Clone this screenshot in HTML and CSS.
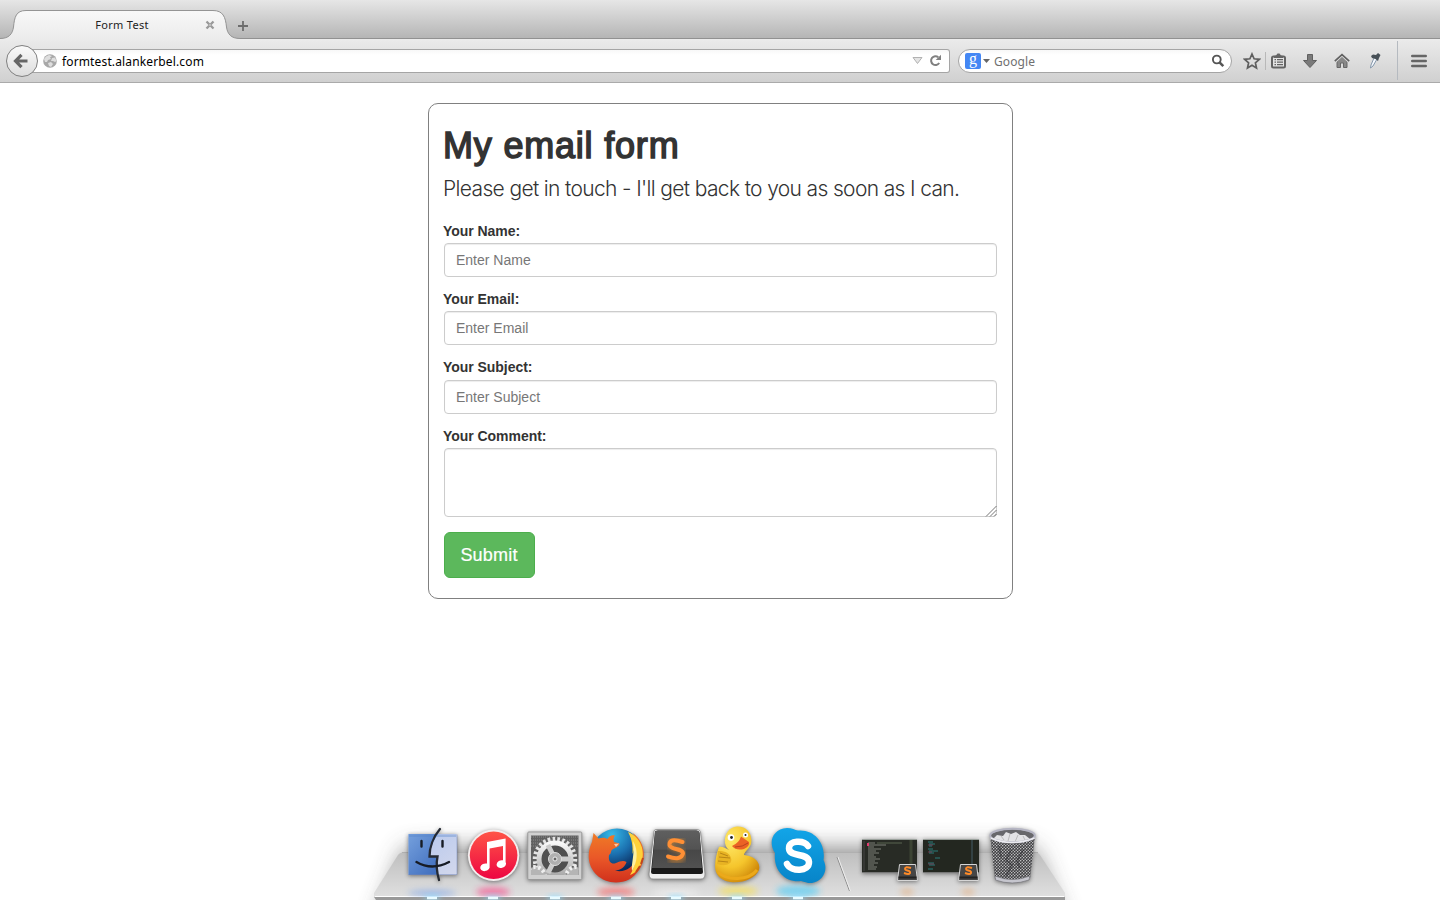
FILE: index.html
```html
<!DOCTYPE html>
<html lang="en">
<head>
<meta charset="utf-8">
<title>Form Test</title>
<link rel="stylesheet" href="styles.css">
</head>
<body>
<header class="chrome">
  <div class="tabstrip">
    <svg class="tab-shape" width="240" height="40" viewBox="0 0 240 40"><defs><linearGradient id="tabfill" x2="0" y2="1"><stop offset="0" stop-color="#f8f8f8"/><stop offset="1" stop-color="#ebebeb"/></linearGradient></defs><path d="M0 38.500C9 38.500 12.500 34 13.500 27C14.500 17 16 10.500 26 10.500H213C223 10.500 225.500 17 226.500 27C227.500 34 231 38.500 240 38.500V40H0Z" fill="url(#tabfill)"/><path d="M0 38.500C9 38.500 12.500 34 13.500 27C14.500 17 16 10.500 26 10.500H213C223 10.500 225.500 17 226.500 27C227.500 34 231 38.500 240 38.500" fill="none" stroke="#949494"/></svg>
    <span class="tab-title">Form Test</span>
    <svg class="tab-close" width="10" height="10" viewBox="0 0 10 10"><path d="M1.500 1.500L8.500 8.500M8.500 1.500L1.500 8.500" stroke="#999" stroke-width="2.300"/><path d="M5 4V6" stroke="#ddd"/></svg>
    <svg class="tab-new" width="12" height="12" viewBox="0 0 12 12"><path d="M6 1V11M1 6H11" stroke="#6d6d6d" stroke-width="1.800"/></svg>
  </div>
  <div class="toolbar">
    <button class="back" aria-label="Back"><svg width="16" height="16" viewBox="0 0 16 16"><path d="M8.500 1.800L2.500 8L8.500 14.200M3 8H14.500" fill="none" stroke="#666" stroke-width="3.200"/></svg></button>
    <div class="urlbar">
      <svg width="14" height="14" viewBox="0 0 14 14"><circle cx="7" cy="7" r="6.800" fill="#a8a8a8"/><path d="M1 5L3 2.500L6 1L9 2L7 3.500L8 5L5 6L4 8L2 8ZM9 4L12 3.500L13.500 7L12 8L10 7L8 7ZM5 9L8 8L10 10L8 13L6 12Z" fill="#dedede"/></svg>
      <span class="url">formtest.alankerbel.com</span>
      <svg class="url-drop" width="11" height="9" viewBox="0 0 11 9"><path d="M1 1.500H10L5.500 7.500Z" fill="#e4e4e4" stroke="#b2b2b2"/></svg>
      <svg class="reload" width="13" height="13" viewBox="0 0 13 13"><path d="M10.200 9A4.400 4.400 0 1 1 9.300 3.200" fill="none" stroke="#808080" stroke-width="2"/><path d="M12 .7V6H6.700Z" fill="#808080"/></svg>
    </div>
    <div class="search">
      <span class="engine">g</span>
      <svg width="7" height="4" viewBox="0 0 7 4"><path d="M0 0H7L3.500 4Z" fill="#666"/></svg>
      <span class="search-text">Google</span>
      <svg width="14" height="14" viewBox="0 0 14 14"><circle cx="5.800" cy="5.500" r="3.900" fill="none" stroke="#555" stroke-width="1.900"/><path d="M8.500 8.300L12.300 12.200" stroke="#555" stroke-width="2.500"/></svg>
    </div>
    <div class="tools">
      <svg width="18" height="18" viewBox="0 0 18 18"><path d="M9 2L11.100 6.800L16.300 7.300L12.400 10.800L13.500 16L9 13.300L4.500 16L5.600 10.800L1.700 7.300L6.900 6.800Z" fill="none" stroke="#5f5f5f" stroke-width="1.700"/></svg>
      <i class="small-divider"></i>
      <svg class="clip" width="15" height="16" viewBox="0 0 15 16"><rect x="1" y="3.500" width="13" height="11" rx="1.500" fill="#e4e4e4" stroke="#646464" stroke-width="2"/><path d="M3 5V3L5 2.500L6.500 .5H8.500L10 2.500L12 3V5Z" fill="#646464"/><path d="M3.500 6.700H5M6 6.700H12M3.500 9.200H5M6 9.200H12M3.500 11.700H5M6 11.700H12" stroke="#646464" stroke-width="1.300"/></svg>
      <svg class="download" width="16" height="16" viewBox="0 0 16 16"><path d="M5.500 1.500H10.500V7.500H14.500L8 14.500L1.500 7.500H5.500Z" fill="#7a7a7a" stroke="#606060"/></svg>
      <svg class="home" width="16" height="16" viewBox="0 0 16 16"><path d="M3 8V14.500H6.500V10H9.500V14.500H13V8L8 3.500Z" fill="#888" stroke="#666"/><path d="M1 8.500L8 2L15 8.500" fill="none" stroke="#ddd" stroke-width="3"/><path d="M.8 8.200L8 1.700L15.200 8.200" fill="none" stroke="#606060" stroke-width="1.700"/></svg>
      <svg class="dropper" width="14" height="18" viewBox="0 0 14 18"><path d="M6 6L3 13L2.500 16L5 14L9 7" fill="#f7faff" stroke="#8497ab"/><path d="M3 4L5 2.500L8 3L10 1L12.500 3L11 6L10 9L7.500 7L4 6Z" fill="#475057"/></svg>
      <i class="large-divider"></i>
      <svg class="menu" width="16" height="14" viewBox="0 0 16 14"><path d="M1.200 2H14.800M1.200 7H14.800M1.200 12H14.800" stroke="#666" stroke-width="2.400" stroke-linecap="round"/></svg>
    </div>
  </div>
</header>
<main class="page">
  <form class="card">
    <h1>My email form</h1>
    <p class="lead">Please get in touch - I'll get back to you as soon as I can.</p>
    <div class="group"><label for="name">Your Name:</label><input id="name" placeholder="Enter Name"></div>
    <div class="group"><label for="email">Your Email:</label><input id="email" placeholder="Enter Email"></div>
    <div class="group"><label for="subject">Your Subject:</label><input id="subject" placeholder="Enter Subject"></div>
    <div class="group"><label for="comment">Your Comment:</label><div class="area"><textarea id="comment"></textarea><svg class="grip" width="12" height="12" viewBox="0 0 12 12"><path d="M1 11.500L11.500 1M5 11.500L11.500 5M9 11.500L11.500 9" stroke="#777"/></svg></div></div>
    <button class="submit" type="button">Submit</button>
  </form>
</main>
<footer class="dock">
  <svg class="shelf" width="800" height="85" viewBox="320 815 800 85">
    <defs>
      <linearGradient id="shelfFill" x2="0" y2="1"><stop offset="0" stop-color="#bebebe"/><stop offset=".5" stop-color="#cfcfcf"/><stop offset="1" stop-color="#e0e0e0"/></linearGradient>
      <filter id="b9" x="-20%" y="-60%" width="140%" height="220%"><feGaussianBlur stdDeviation="12"/></filter>
      <filter id="b3" x="-50%" y="-80%" width="200%" height="260%"><feGaussianBlur stdDeviation="3"/></filter>
    </defs>
    <path d="M406 849H1034L1063 925H377Z" fill="#444" opacity=".68" filter="url(#b9)"/>
    <path d="M406 852H1034Q1038 852 1040 855L1065 893V897H374V893L398 855Q400 852 406 852Z" fill="url(#shelfFill)"/>
    <path d="M402 852.500H1038" stroke="#b0b0b0"/>
    <path d="M375 896.500H1064" stroke="#fff"/>
    <g filter="url(#b3)" opacity=".5"><ellipse cx="432" cy="893" rx="24" ry="3" fill="#5a90ed"/><ellipse cx="493" cy="892" rx="17" ry="5" fill="#ff2776"/><ellipse cx="616" cy="892" rx="19" ry="5" fill="#ff4747"/><ellipse cx="676" cy="893" rx="24" ry="3" fill="#fff"/><ellipse cx="738" cy="891" rx="20" ry="5" fill="#ffe026"/><ellipse cx="798" cy="891" rx="22" ry="6" fill="#25c8ff"/><ellipse cx="907" cy="892" rx="7" ry="3" fill="#e79a55"/><ellipse cx="968" cy="892" rx="7" ry="3" fill="#e79a55"/></g>
    <path d="M374 897H1065V900H376Z" fill="#999"/>
    <path d="M837 857L849.500 891" stroke="#8c8c8c"/><path d="M838 857L850.500 891" stroke="#eee"/>
    <g fill="#8ddcff" filter="url(#b3)"><rect x="425" y="896" width="14" height="4"/><rect x="486" y="896" width="14" height="4"/><rect x="548" y="896" width="14" height="4"/><rect x="609" y="896" width="14" height="4"/><rect x="669" y="896" width="14" height="4"/><rect x="730" y="896" width="14" height="4"/><rect x="791" y="896" width="14" height="4"/></g>
    <path d="M427 898H437M488 898H498M550 898H560M611 898H621M671 898H681M732 898H742M793 898H803" stroke="#e9fbff" stroke-width="2.500"/>
  </svg>
  <div class="apps">
    <svg class="app" viewBox="0 0 61 85"><defs><linearGradient id="fl" x2=".8" y2="1"><stop stop-color="#75a0dd"/><stop offset="1" stop-color="#4270bf"/></linearGradient><linearGradient id="fr" x2="1" y2="1"><stop stop-color="#b3c6ed"/><stop offset="1" stop-color="#d3d8ec"/></linearGradient></defs><rect x="6.500" y="19" width="48.500" height="41" rx="1" fill="url(#fr)"/><path d="M6.500 19H36C31 26 28 34 27.500 41.500H35L36 60H6.500Z" fill="url(#fl)"/><path d="M7 19.500H54V22H7Z" fill="#5783c9" opacity=".35"/><path d="M7 59.500H55V19.500" fill="none" stroke="#6f84b3" stroke-opacity=".5"/><path d="M38 14C31 22 27.500 33 27.500 41.500H35.500C34 49 35 58 37 65" fill="none" stroke="#252a33" stroke-width="2.300" stroke-linecap="round"/><path d="M14.500 47Q30 56 47 47M19.500 26V31.500M40.500 26V31.500" fill="none" stroke="#171c25" stroke-width="2.400" stroke-linecap="round"/></svg>
    <svg class="app" viewBox="0 0 61 85"><defs><linearGradient id="it" x2="0" y2="1"><stop stop-color="#ff5547"/><stop offset="1" stop-color="#ed0642"/></linearGradient></defs><circle cx="30.600" cy="40.300" r="25.700" fill="#f4eeee"/><circle cx="30.600" cy="40.300" r="23.800" fill="url(#it)"/><path d="M24 27L42.600 23.500V47A4.800 3.800 -15 1 1 40 45.300V31L26.600 33.600V51A4.800 3.800 -15 1 1 24 48.600Z" fill="#fff"/></svg>
    <svg class="app" viewBox="0 0 61 85"><defs><clipPath id="gc"><rect x="7" y="20.500" width="47.500" height="39.500"/></clipPath><linearGradient id="metal" x2="0" y2="1"><stop stop-color="#f8f8f8"/><stop offset="1" stop-color="#aaa"/></linearGradient></defs><rect x="3.800" y="17" width="54" height="47.500" rx="1" fill="#d0d0d0" stroke="#999"/><rect x="7" y="20.500" width="47.500" height="39.500" fill="#606060"/><g clip-path="url(#gc)"><path d="M7 22H55M7 25H55M7 28H55M7 31H55" stroke="#8b8b8b" stroke-dasharray="1 1"/><circle cx="31" cy="44" r="20" fill="none" stroke="#e4e4e4" stroke-width="4.500" stroke-dasharray="2.600 2.200"/><circle cx="31" cy="44" r="16" fill="#505050" stroke="url(#metal)" stroke-width="5"/><path d="M31 44L24 30M31 44L47 44M31 44L24 58" stroke="#ccc" stroke-width="5"/><circle cx="31" cy="44" r="6.500" fill="#b0b0b0" stroke="#ddd"/><circle cx="31" cy="44" r="2" fill="#666" stroke="#eee"/><g fill="#b5b5b5" stroke="#eee" stroke-width="4" stroke-dasharray="2.500 2.500"><circle cx="11" cy="62" r="10"/><circle cx="52" cy="62" r="10"/></g></g></svg>
    <svg class="app" viewBox="0 0 61 85"><defs><radialGradient id="globe" cx=".4" cy=".12" r=".7"><stop stop-color="#35bbe9"/><stop offset=".55" stop-color="#1b6fae"/><stop offset="1" stop-color="#0a2a5c"/></radialGradient><linearGradient id="fox" x2="0" y2="1"><stop stop-color="#ef7b26"/><stop offset=".5" stop-color="#ea5828"/><stop offset="1" stop-color="#d0301c"/></linearGradient></defs><circle cx="32" cy="39.500" r="26" fill="url(#globe)"/><path d="M48 18C60 27 62 43 54 55C48 64 40 67.500 31 67.500C16 67.500 4 56 3.700 42C3.500 35 5.500 30 7 27L8.500 18L13.500 23.500C18 22 21 23 22.500 24C24 21 27 19.500 30 20.500C28 23 28.500 25 29 27L34.500 28.500C35 31 31 32.500 28 34C25 35.500 27 38.500 24 40C23 46 26 50 31 48C35 46 39 45 41.500 47C40 52 36 55 30 55.500C39 58 48 53 51 44C54 34 52 25 48 18Z" fill="url(#fox)"/><path d="M43 17C56 22 61 37 56 49C54 55 50 58 45 60C50 52 52 43 49 35L47.500 39C48 31 47 24 43 17Z" fill="#ffd13a"/><path d="M48 26C54 36 52 48 47 56C46 48 50 40 48 26Z" fill="#fff0a0"/><path d="M29 29L34 28.500L31 32Z" fill="#ffc6a0"/><path d="M55 51L51 57M58 43L56 49" stroke="#c2471b" stroke-width="2"/></svg>
    <svg class="app" viewBox="0 0 61 85"><defs><linearGradient id="key" x2="0" y2="1"><stop stop-color="#5f5f5f"/><stop offset=".5" stop-color="#535353"/><stop offset=".52" stop-color="#474747"/><stop offset="1" stop-color="#515151"/></linearGradient><filter id="glow"><feGaussianBlur stdDeviation="2"/></filter></defs><path d="M8 16Q8 14.500 11 14.500H51Q54 14.500 54.500 17L59 59Q59 64 55 64H7Q3 64 3 59Z" fill="#eee" stroke="#888" stroke-width=".8"/><path d="M9 17Q9 15.500 12 15.500H50Q53 15.500 53.500 18L57 57Q57 59 55 59H7Q5 59 5 57Z" fill="#191919"/><path d="M9 17Q9 15.500 12 15.500H50Q53 15.500 53.500 18L56 53H6Z" fill="url(#key)"/><path d="M38 27Q23 22 24 31C25 35 38 34 38 40Q37 48 23 44" fill="none" stroke="#ff9520" stroke-width="5" filter="url(#glow)" opacity=".5"/><path d="M36.500 27Q23 22.500 23.500 30C24 35 37 33 37 38.500Q35 46 22 41.500" fill="none" stroke="#ff8f35" stroke-width="4" stroke-linecap="round"/></svg>
    <svg class="app" viewBox="0 0 61 85"><defs><radialGradient id="duck" cx=".35" cy=".25" r=".8"><stop stop-color="#ffe968"/><stop offset=".6" stop-color="#f5c52c"/><stop offset="1" stop-color="#cf8809"/></radialGradient></defs><path d="M22 35C14 29 18 12 30 11.500C40 11 46 19 44 29C42 34 37 37 37 40C46 41 54 46 52 55C46 69 17 72 10 59C6 53 9 40 12 32C15 31 18 33 22 35Z" fill="url(#duck)"/><path d="M11 36C17 36 22 37 24 43C26 49 18 52 10 49" fill="#e8b323"/><path d="M13 38L21 41M12 42L23 43M11 46L21 47" fill="none" stroke="#b98515"/><path d="M11 57C20 66 41 66 50 55" fill="none" stroke="#eca91a" stroke-width="3"/><circle cx="24" cy="22.500" r="3.300" fill="#fff"/><circle cx="38.500" cy="20" r="2.500" fill="#fff"/><circle cx="24.500" cy="22.500" r="1.400" fill="#222"/><circle cx="38.500" cy="20" r="1" fill="#222"/><path d="M25 31Q32 28 34 21.500Q39 25 42 27Q43 31 37 34Q29 36 25 31Z" fill="#eb6225"/><path d="M28 32Q36 32 41 28" fill="none" stroke="#b9441c"/></svg>
    <svg class="app" viewBox="0 0 61 85"><defs><linearGradient id="sk" x2="0" y2="1"><stop stop-color="#12a5e8"/><stop offset="1" stop-color="#0784c8"/></linearGradient></defs><path d="M19 13C24 13 27 15 30 15.500C47 14 58 29 55.500 45C61 56 54 67 44 68C40 68.500 37 67 33 66C17 68 5 55 7 38C0 28 4 14 19 13Z" fill="url(#sk)"/><path d="M40 31C36 25 20.500 25 21 33.500C21.500 43 40.500 37 41 47C41.500 57 23 57 19 49" fill="none" stroke="#fff" stroke-width="6.500" stroke-linecap="round"/></svg>
    <span class="dock-gap"></span>
    <svg class="app" viewBox="0 0 61 85"><rect x="3" y="24" width="55" height="34" fill="#282b25"/><path d="M3 24.500H58" stroke="#9ba29d"/><path d="M3 57.500H58" stroke="#777"/><path d="M5 26V56" stroke="#444"/><path d="M9 28H16M10 30H27M9 32H15M9 34H22M9 36H17M9 38H20M9 40H15M9 42H17M9 44H21M9 46H16M9 48H19M9 50H15M9 52H18M9 54H17" stroke="#a2a49b" stroke-width=".7"/><path d="M18 28H43" stroke="#596450"/><path d="M9 28V31" stroke="#e33b70" stroke-width="2"/><path d="M52 25V50" stroke="#3c4434" stroke-width="3"/><path d="M40.500 49.500H56.500L58.500 65.500H38.500Z" fill="#464646" stroke="#d5d5d5"/><path d="M39.500 62.500H57.500" stroke="#222" stroke-width="2"/><path d="M52 53Q46 51 46 54C46 56 52 55 51 58Q50 60 45 58" fill="none" stroke="#ff8b28" stroke-width="2"/></svg>
    <svg class="app" viewBox="0 0 61 85"><rect x="3" y="24" width="56" height="34" fill="#232720"/><path d="M3 24.500H59" stroke="#9ba29d"/><path d="M3 57.500H59" stroke="#777"/><path d="M8 27H13M9 29H15M9 31H12M8 34H13M9 36H18M9 38H14M15 43H20M8 48H14M9 50H15M8 54H13" stroke="#2b9293" stroke-width=".8"/><path d="M8 30H13M8 37H12M8 49H14" stroke="#a1446a" stroke-width=".6"/><path d="M52 25V50" stroke="#334143" stroke-width="2"/><path d="M40.500 49.500H56.500L58.500 65.500H38.500Z" fill="#464646" stroke="#d5d5d5"/><path d="M39.500 62.500H57.500" stroke="#222" stroke-width="2"/><path d="M52 53Q46 51 46 54C46 56 52 55 51 58Q50 60 45 58" fill="none" stroke="#ff8b28" stroke-width="2"/></svg>
    <svg class="app" viewBox="0 0 61 85"><defs><pattern id="mesh" width="3" height="3" patternUnits="userSpaceOnUse"><rect width="3" height="3" fill="#3c3c3e"/><circle cx=".7" cy=".7" r=".75" fill="#c7c7ca"/><circle cx="2.200" cy="2.200" r=".75" fill="#c7c7ca"/></pattern></defs><path d="M9 20H54L49 64Q31 71 14 64Z" fill="url(#mesh)"/><path d="M30 35L25 45L31 50L25 61M42 35L36 46L39 53M18 31L20 42" fill="none" stroke="#242427" stroke-width="2" opacity=".4"/><ellipse cx="31.500" cy="21" rx="22" ry="6.500" fill="#68686b"/><path d="M13 23L16 20L22 21L25 17L30 19L35 17L39 20L44 20L49 24Q32 30 13 24Z" fill="#e4e4e6"/><path d="M20 21L23 25M29 19L27 26M37 20L34 27M42 21L44 25" stroke="#bbb"/><ellipse cx="31.500" cy="20.500" rx="22.300" ry="6.800" fill="none" stroke="#b5b5c3" stroke-width="2"/><path d="M9.500 23Q31 32 53.500 23" fill="none" stroke="#ececf1" stroke-width="1.500"/><path d="M14 61Q31 68 49 61L48 65Q31 71 14.500 65Z" fill="#c5c5cd" stroke="#77777c" stroke-width=".7"/></svg>
  </div>
</footer>
</body>
</html>
```
FILE: styles.css
```css
* { box-sizing: border-box; }
body { margin: 0; width: 1440px; height: 900px; overflow: hidden; display: flex; flex-direction: column; background: #fff; color: #333; font-family: "Liberation Sans", Arial, sans-serif; }
svg { display: block; flex: none; }
button, input, textarea { font-family: inherit; }
.chrome { font-family: "Noto Sans", "Open Sans", sans-serif; }
.tabstrip { height: 39px; position: relative; display: flex; align-items: flex-start; background: linear-gradient(#e6e6e6, #d5d5d5 35%, #b5b5b5); border-bottom: 1px solid #919191; }
.tab-shape { position: absolute; left: 0; top: 0; }
.tab-title { position: relative; width: 90px; margin: 17px 0 0 77px; text-align: center; font-size: 11px; line-height: 16px; letter-spacing: .3px; color: #222; }
.tab-close { position: relative; margin: 20px 0 0 38px; }
.tab-new { margin: 20px 0 0 22px; }
.toolbar { height: 44px; display: flex; align-items: center; padding-left: 6px; background: linear-gradient(#ebebeb, #d0d0d0); border-bottom: 1px solid #aaa; }
.back { z-index: 1; width: 32px; height: 32px; padding: 0 0 0 6px; border: 1px solid #808080; border-radius: 50%; background: linear-gradient(#fafafa, #ddd); }
.urlbar { height: 24px; width: 923px; margin-left: -11px; padding: 0 7px 0 16px; display: flex; align-items: center; border: 1px solid #a5a5a5; border-left: 0; border-radius: 0 3px 3px 0; background: linear-gradient(#f8f8f8, #fff 5px); }
.url { flex: 1; padding: 1px 0 0 5px; font-size: 12px; letter-spacing: .14px; color: #000; }
.reload { margin-left: 6px; }
.search { width: 274px; height: 24px; margin-left: 8px; padding: 0 6px; display: flex; align-items: center; border: 1px solid #a5a5a5; border-radius: 12px; background: linear-gradient(#f8f8f8, #fff 5px); }
.engine { width: 16px; height: 16px; margin-right: 2px; border-radius: 2px; background: #4487f4; color: #fff; font: 16px/12px "Liberation Serif", serif; text-align: center; }
.search-text { flex: 1; padding: 1px 0 0 4px; font-size: 12px; letter-spacing: .1px; color: #707070; }
.tools { flex: 1; height: 43px; display: flex; align-items: center; padding-left: 11px; }
.small-divider { width: 1px; height: 18px; margin-left: 4px; background: #b8b8b8; }
.clip { margin-left: 5px; }
.download { margin-left: 16px; }
.home { margin-left: 16px; }
.dropper { margin-left: 18px; }
.large-divider { width: 1px; height: 39px; margin-left: 15px; background: #b5bac0; }
.menu { margin-left: 13px; }
.page { flex: 1; min-height: 0; display: flex; justify-content: center; align-items: flex-start; padding: 20px 0 0 1px; }
.card { width: 585px; height: 496px; padding: 20px 15px 0; border: 1px solid #808080; border-radius: 10px; }
h1 { margin: 2px 0 8px -1px; font-size: 36px; font-weight: 400; line-height: 40px; letter-spacing: .8px; -webkit-text-stroke: 1.500px #333; }
.lead { margin: 0 0 18.500px -1px; font-family: Inter, "Liberation Sans", sans-serif; font-size: 21px; font-weight: 300; line-height: 29px; white-space: nowrap; letter-spacing: -.645px; }
.group { height: 68.400px; }
.group:last-of-type { height: 105.200px; }
label { display: block; height: 21.300px; margin-left: -1px; font-size: 14px; font-weight: 700; line-height: 19px; letter-spacing: -.04px; }
input, textarea { display: block; width: 553px; height: 34px; padding: 6px 11px; border: 1px solid #ccc; border-radius: 4px; box-shadow: inset 0 1px 1px rgba(0, 0, 0, .075); font-size: 14px; }
input::placeholder { color: #777; opacity: 1; }
textarea { height: 69px; resize: none; }
.area { position: relative; width: 553px; }
.grip { position: absolute; right: 0; bottom: 0; }
.submit { width: 91px; height: 46px; padding: 2px 1px 0 0; border: 1px solid #4cae4c; border-radius: 6px; background: #5cb85c; color: #fff; font-size: 18px; letter-spacing: .2px; -webkit-text-stroke: .2px #fff; }
.dock { position: relative; flex: none; height: 85px; }
.shelf { position: absolute; left: 320px; top: 0; overflow: visible; }
.apps { position: relative; display: flex; margin-left: 402px; }
.app { width: 61px; height: 85px; filter: drop-shadow(0 1px 2px rgba(0, 0, 0, .45)); }
.dock-gap { width: 30px; }
```
